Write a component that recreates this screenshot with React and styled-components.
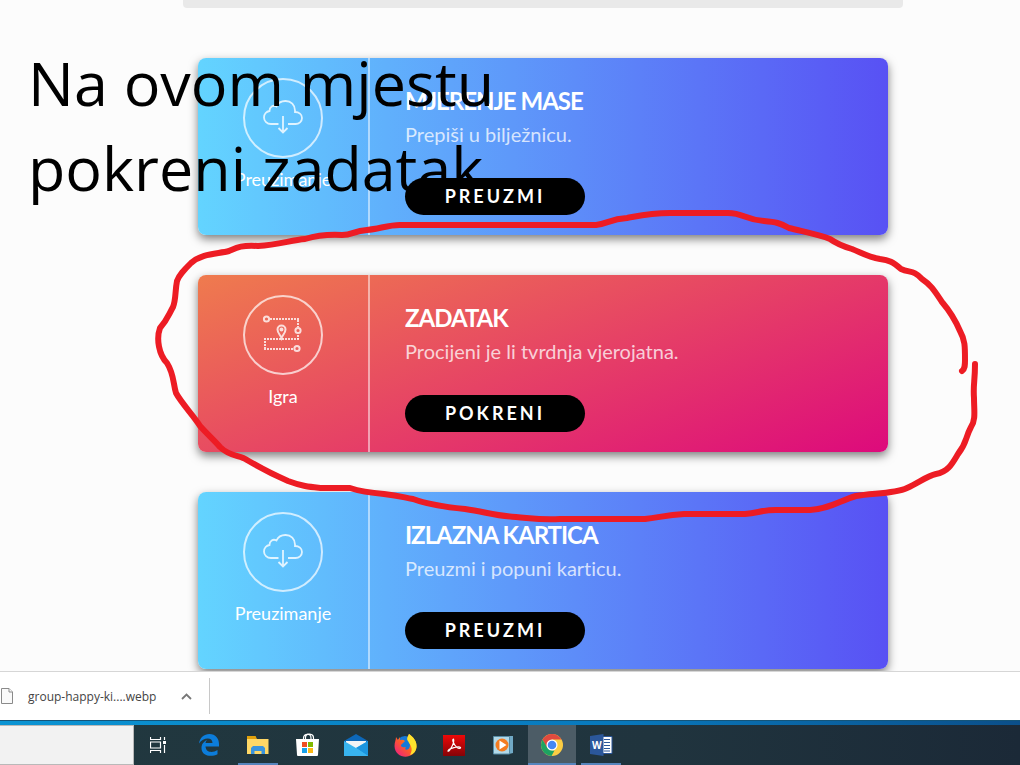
import React from 'react';
import styled, { createGlobalStyle } from 'styled-components';

const GlobalStyle = createGlobalStyle`
    * {
        box-sizing: border-box;
    }

    body {
        margin: 0;
        background-color: #fcfcfc;
        font-family: 'Open Sans', 'Noto Sans', sans-serif;
    }
`;

const Screen = styled.div`
    display: flex;
    flex-direction: column;
    height: 100vh;
    overflow: hidden;
`;

const Main = styled.main`
    position: relative;
    flex: 1;
    min-height: 0;
    overflow: hidden;
    padding: 0 117px 0 183px;
    background-color: #fcfcfc;
`;

const TopPanel = styled.div`
    height: 8px;
    margin-bottom: 50px;
    border-radius: 0 0 4px 4px;
    background-color: #e9e9e9;
`;

const CardList = styled.div`
    display: flex;
    flex-direction: column;
    gap: 40px;
    padding: 0 15px;
    font-family: Lato, sans-serif;
    font-variant-ligatures: none;
`;

const Card = styled.article`
    display: flex;
    border-radius: 8px;
    color: #fff;
    background: ${({ $game }) =>
        $game
            ? 'linear-gradient(160deg, #ef7b4e 0%, #dd0a7c 100%)'
            : 'linear-gradient(90deg, #63d4ff 0%, #5851f4 100%)'};
    box-shadow: 0 4px 10px rgba(0, 0, 0, 0.5);
`;

const CardSide = styled.div`
    display: flex;
    flex-direction: column;
    align-items: center;
    flex: 0 0 172px;
    height: 177px;
    padding-top: 20px;
    border-right: 2px solid rgba(255, 255, 255, 0.5);
`;

const IconCircle = styled.div`
    display: flex;
    align-items: center;
    justify-content: center;
    width: 80px;
    height: 80px;
    border: 2px solid rgba(255, 255, 255, 0.7);
    border-radius: 50%;
`;

const CardLabel = styled.span`
    margin-top: 9px;
    font-size: 18px;
    line-height: 24px;
`;

const CardBody = styled.div`
    flex: 1;
    padding: 27px 35px 0;
`;

const CardTitle = styled.h2`
    margin: 0;
    font-size: 24px;
    font-weight: 700;
    line-height: 32px;
    letter-spacing: -1px;
`;

const CardText = styled.p`
    margin: 3px 0 30px;
    font-size: 20px;
    line-height: 28px;
    color: rgba(255, 255, 255, 0.75);
`;

const CardButton = styled.button`
    position: relative;
    z-index: 2;
    display: block;
    width: 180px;
    height: 37px;
    padding: 0 0 2px;
    border: none;
    border-radius: 19px;
    background-color: #000;
    color: #fff;
    font-family: Lato, sans-serif;
    font-size: 18px;
    font-weight: 700;
    letter-spacing: 3px;
    cursor: pointer;
`;

const Note = styled.p`
    position: absolute;
    z-index: 1;
    top: 40px;
    left: 28px;
    width: 480px;
    margin: 0;
    font-size: 61px;
    line-height: 85px;
    color: #000;
`;

const Marker = styled.svg`
    position: absolute;
    z-index: 3;
    top: 0;
    left: 0;
    pointer-events: none;
`;

const DownloadBar = styled.footer`
    display: flex;
    align-items: center;
    flex: 0 0 49px;
    border-top: 1px solid #d6d6d6;
    background-color: #fff;
`;

const DownloadItem = styled.div`
    display: flex;
    align-items: center;
    width: 210px;
    height: 36px;
    border-right: 1px solid #c8c8c8;
`;

const FileLink = styled.a`
    display: flex;
    align-items: center;
    flex: 1;
    gap: 14px;
    font-size: 12px;
    color: #444;
    text-decoration: none;
`;

const MenuButton = styled.button`
    display: flex;
    width: 46px;
    justify-content: center;
    padding: 0;
    border: none;
    background: none;
`;

const Desktop = styled.div`
    flex: 0 0 5px;
    border-top: 1px solid #14557a;
    background: linear-gradient(90deg, #0b94d3, #0879bd 60%, #0b4f8a);
`;

const Taskbar = styled.nav`
    display: flex;
    flex: 0 0 40px;
    gap: 1px;
    background: linear-gradient(90deg, #21383f, #20343e 65%, #1b2937);
`;

const SearchBox = styled.input`
    width: 134px;
    height: 40px;
    margin-right: 1px;
    padding: 0 12px;
    border: 1px solid #b9b9b9;
    border-left: none;
    border-radius: 0;
    background-color: #f2f2f2;
`;

const TaskButton = styled.button`
    display: flex;
    align-items: center;
    justify-content: center;
    width: 48px;
    height: 40px;
    padding: 0;
    border: none;
    background: ${({ $active }) => ($active ? '#4c5c66' : 'none')};
    box-shadow: ${({ $open }) => ($open ? 'inset 0 -2px #5685bd' : 'none')};
`;

const OpenTask = styled(TaskButton)`
    width: 40px;
    margin: 0 4px;
`;

const CloudIcon = () => (
    <svg width="40" height="36" viewBox="0 0 40 36" fill="none" stroke="#fff" strokeOpacity="0.8" strokeWidth="1.8">
        <path d="M15.5 24H8C4 24 1 21 1 17.5S3.5 11.5 6.5 11C6.5 7 10 4.500 13.500 6.500C15 3 18.500 1 22.500 1C28 1 32 5 32 10.500V12C36 12 39 14.500 39 18S36 24 32.500 24H25" />
        <path d="M20 16V32M15.500 28L20 32.500L24.500 28" />
    </svg>
);

const RouteIcon = () => (
    <svg width="42" height="40" viewBox="0 0 42 40" fill="none" stroke="#fff" strokeOpacity="0.78" strokeWidth="2">
        <path d="M8 4H37" strokeDasharray="2 1" />
        <path d="M36 5V12M36 20V24" strokeDasharray="2 1" />
        <path d="M37 24H2M3 26V34M2 34H31" strokeDasharray="2 1" />
        <circle cx="4.500" cy="4" r="2.600" />
        <circle cx="36" cy="15.500" r="2.600" />
        <circle cx="35" cy="33.500" r="2.600" />
        <path d="M19.500 23C18.500 20 15.500 18 15.500 14.500A4 4 0 0 1 23.500 14.500C23.500 18 20.500 20 19.500 23Z" />
        <circle cx="19.500" cy="14.500" r="1" />
    </svg>
);

const FileIcon = () => (
    <svg width="14" height="17" viewBox="0 0 14 17" fill="#fafafa" stroke="#8a8a8a">
        <path d="M1.500 .5H9L12.500 4V15.500H1.500Z" />
        <path d="M9 .5V4H12.500" />
    </svg>
);

const TaskViewIcon = () => (
    <svg width="20" height="16" viewBox="0 0 20 16" fill="none" stroke="#fff" strokeWidth="1.200">
        <path d="M.5 0V2.500H10.500V0M.5 16V13.500H10.500V16M.5 5H10.500V11H.5ZM14.500 0V3M14.500 8V16" />
        <path d="M13 4H16V7H13Z" fill="#fff" stroke="none" />
    </svg>
);

const EdgeIcon = () => (
    <svg width="20" height="22" viewBox="0 0 20 22">
        <path
            fill="#0c7ddb"
            d="M0 9.500C1 3.500 5 0 10.500 0C16.500 0 20 4.500 20 10V12.500H6.500C7 19 14 19 18.500 16V20.300C12 23.500 2.500 22 2.500 14C2.500 10 5 7.500 8 6C7 7 6.500 8 6.500 9H13.500C13.500 2.500 4 3.500 0 9.500Z"
        />
    </svg>
);

const FolderIcon = () => (
    <svg width="22" height="19" viewBox="0 0 22 19">
        <path fill="#e0a10c" d="M0 1H9L10 3H21V6H0Z" />
        <path fill="#ffd866" d="M0 3H21.500V18H0Z" />
        <path fill="#e0a10c" d="M0 0H9L8 3H0Z" />
        <path fill="#3a94dd" d="M4 18V12L6 10H16L18 12V18H14.500V15H7.500V18Z" />
    </svg>
);

const StoreIcon = () => (
    <svg width="23" height="24" viewBox="0 0 23 24">
        <path fill="none" stroke="#fff" strokeWidth="1.200" d="M7.500 7V5C7.500 0 15 0 15 5V7M9.500 7V4C10 0 17.500 0 17.500 5V7" />
        <path fill="#fff" d="M0 6H23L22 22Q22 23 21 23H2Q1 23 1 22Z" />
        <path fill="#f04e23" d="M6 9H11V14H6Z" />
        <path fill="#80b900" d="M12 9H17V14H12Z" />
        <path fill="#18a1ea" d="M6 15H11V20H6Z" />
        <path fill="#fcb813" d="M12 15H17V20H12Z" />
    </svg>
);

const MailIcon = () => (
    <svg width="24" height="22" viewBox="0 0 24 22">
        <path fill="#0d68b9" d="M0 7L12 0L24 7V9H0Z" />
        <path fill="#f1f3f5" d="M2 7H22V15H2Z" />
        <path fill="#38b4ef" d="M0 7L12 14L24 22H0Z" />
        <path fill="#45bdf3" d="M24 7V22H20L12 14Z" />
        <path fill="#1b95df" d="M12 14L24 7V22Z" />
        <path fill="#38b4ef" d="M12 14L24 22H0Z" />
    </svg>
);

const FirefoxIcon = () => (
    <svg width="23" height="23" viewBox="0 0 23 23">
        <defs>
            <linearGradient id="fox" x1="0" y1="1" x2="1" y2="0">
                <stop offset="0" stopColor="#ed168f" />
                <stop offset=".5" stopColor="#ff6022" />
                <stop offset="1" stopColor="#ffd928" />
            </linearGradient>
        </defs>
        <circle cx="11" cy="11" r="9" fill="#1679d8" />
        <path fill="url(#fox)" d="M2 3L4 6L6 3V6Q9 5 11 7L8 10C5 12 9 14 12 13C9 17 16 17 16 11C16 7 13 5 15 0C19 3 23 7 22.500 13C21 26 1 26 .5 12C.5 8 2 6 2 3Z" />
        <path fill="#ffe32d" d="M15 0C19 3 23 7 22.500 13C22 17 20 20 16 21C20 14 16 11 14 7C12 5 14 2 15 0Z" />
    </svg>
);

const AcrobatIcon = () => (
    <svg width="22" height="21" viewBox="0 0 22 21">
        <defs>
            <linearGradient id="pdf" x1="0" y1="0" x2="0" y2="1">
                <stop offset="0" stopColor="#ed0808" />
                <stop offset="1" stopColor="#850307" />
            </linearGradient>
        </defs>
        <path fill="url(#pdf)" d="M0 0H22V21H0Z" />
        <path
            fill="none"
            stroke="#fff"
            strokeWidth="1.200"
            d="M10.500 4C8.500 4 11 10 13.500 12C16 14 18 13.500 17.500 12.500C16.500 10.500 5 13.500 5 16C5.500 18 12 8 10.500 4Z"
        />
    </svg>
);

const PlayerIcon = () => (
    <svg width="21" height="20" viewBox="0 0 21 20">
        <path fill="#71aac6" d="M5 1H20V18L16 19Z" />
        <path fill="#b2d9e8" stroke="#578da7" d="M.5 1.500H16.500V19H.5Z" />
        <circle cx="9" cy="10" r="6.500" fill="#f47c20" />
        <path fill="#fff" d="M6.500 5.500L13.500 10L6.500 14.500Z" />
    </svg>
);

const ChromeIcon = () => (
    <svg width="22" height="22" viewBox="0 0 22 22">
        <circle cx="11" cy="11" r="11" fill="#fccd43" />
        <path fill="#e04a3f" d="M1.500 5.500A11 11 0 0 1 20.500 5.500H11L6 14Z" />
        <path fill="#1da362" d="M1.500 5.500L6.300 13.700L11 16.500H13.500L10.500 22A11 11 0 0 1 1.500 5.500Z" />
        <circle cx="11" cy="11" r="5.500" fill="#fff" />
        <circle cx="11" cy="11" r="4.300" fill="#4587f3" />
    </svg>
);

const WordIcon = () => (
    <svg width="23" height="22" viewBox="0 0 23 22">
        <path fill="#fff" stroke="#2b579a" d="M12 2.500H22V19.500H12Z" />
        <path stroke="#2b579a" d="M14 5.500H20M14 8.500H20M14 11.500H20M14 14.500H20M14 17H20" />
        <path fill="#2b579a" d="M0 2L13.500 0V22L0 20Z" />
        <text x="2" y="15" fill="#fff" fontFamily="Open Sans, sans-serif" fontWeight="700" fontSize="10">W</text>
    </svg>
);

const cards = [
    { title: 'MJERENJE MASE', text: 'Prepiši u bilježnicu.', label: 'Preuzimanje', action: 'PREUZMI' },
    { title: 'ZADATAK', text: 'Procijeni je li tvrdnja vjerojatna.', label: 'Igra', action: 'POKRENI', game: true },
    { title: 'IZLAZNA KARTICA', text: 'Preuzmi i popuni karticu.', label: 'Preuzimanje', action: 'PREUZMI' },
];

const App = () => {
    return (
        <Screen>
            <GlobalStyle />
            <Main>
                <TopPanel />
                <CardList>
                    {cards.map((card) => (
                        <Card key={card.title} $game={card.game}>
                            <CardSide>
                                <IconCircle>{card.game ? <RouteIcon /> : <CloudIcon />}</IconCircle>
                                <CardLabel>{card.label}</CardLabel>
                            </CardSide>
                            <CardBody>
                                <CardTitle>{card.title}</CardTitle>
                                <CardText>{card.text}</CardText>
                                <CardButton>{card.action}</CardButton>
                            </CardBody>
                        </Card>
                    ))}
                </CardList>
                <Note>Na ovom mjestu pokreni zadatak</Note>
                <Marker width="1020" height="671" viewBox="0 0 1020 671" fill="none" stroke="#ed1c24" strokeWidth="6" strokeLinecap="round" strokeLinejoin="round">
                    <path d="M962 371C965 369 965 365 965 360C965 346 965 340 960 331C954 317 948 309 942 302C934 290 931 285 922 279C914 270 910 273 901 269C893 262 889 260 880 259C868 257 862 253 852 249C842 246 837 244 830 239C820 235 805 232 789 228C780 223 776 222 764 221C745 220 744 213 728 213H670C650 213 638 216 627 218C610 219 607 224 596 225H400C388 225 379 229 367 230C353 231 353 235 342 235C324 234 315 236 305 239C291 240 279 245 258 246C240 245 236 248 229 251C218 254 202 253 191 263C184 270 179 275 177 281C175 291 176 300 173 307C168 316 167 320 160 328C156 339 159 355 167 363C174 374 173 383 176 393C182 404 194 416 200 426C209 436 214 440 220 447C230 457 240 455 247 460C264 470 274 475 288 481C304 487 311 487 322 488H350C362 492 372 493 384 494C399 496 402 497 413 499C426 504 445 507 465 509C486 512 496 516 516 517C538 519 542 520 560 519H645C661 517 667 515 684 514H745C759 513 760 510 776 510H810C829 509 839 501 856 496C873 493 894 494 907 488C920 482 927 476 936 474C948 472 952 464 958 454C967 443 965 438 971 427C976 420 974 410 974 398C973 384 975 382 975 364" />
                </Marker>
            </Main>
            <DownloadBar>
                <DownloadItem>
                    <FileLink href="#">
                        <FileIcon />
                        group-happy-ki....webp
                    </FileLink>
                    <MenuButton aria-label="Download options">
                        <svg width="11" height="7" viewBox="0 0 11 7" fill="none" stroke="#777" strokeWidth="1.800">
                            <path d="M1 6L5.500 1.500L10 6" />
                        </svg>
                    </MenuButton>
                </DownloadItem>
            </DownloadBar>
            <Desktop />
            <Taskbar>
                <SearchBox aria-label="Search" />
                <TaskButton aria-label="Task view"><TaskViewIcon /></TaskButton>
                <TaskButton aria-label="Edge"><EdgeIcon /></TaskButton>
                <OpenTask $open aria-label="File Explorer"><FolderIcon /></OpenTask>
                <TaskButton aria-label="Store"><StoreIcon /></TaskButton>
                <TaskButton aria-label="Mail"><MailIcon /></TaskButton>
                <TaskButton aria-label="Firefox"><FirefoxIcon /></TaskButton>
                <TaskButton aria-label="Acrobat"><AcrobatIcon /></TaskButton>
                <TaskButton aria-label="Media player"><PlayerIcon /></TaskButton>
                <TaskButton $active $open aria-label="Chrome"><ChromeIcon /></TaskButton>
                <OpenTask $open aria-label="Word"><WordIcon /></OpenTask>
            </Taskbar>
        </Screen>
    );
};

export default App;
